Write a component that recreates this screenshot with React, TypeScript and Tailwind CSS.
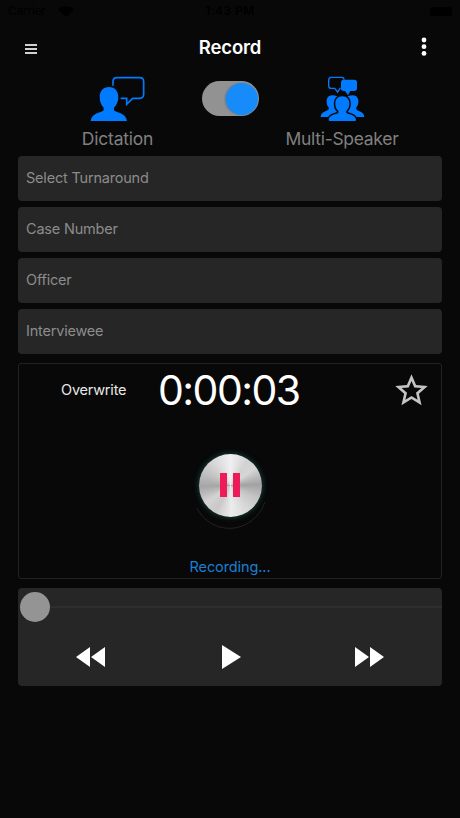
import { MdStarBorder } from 'react-icons/md';

const fields = ['Select Turnaround', 'Case Number', 'Officer', 'Interviewee'];

function StatusBar() {
    return (
        <div className="grid h-[22px] shrink-0 grid-cols-3 items-center px-2 text-[12px] text-black">
            <div className="flex items-center gap-3">
                <span className="tracking-[-0.2px]">Carrier</span>
                <svg width="16" height="11" viewBox="0 0 16 11" fill="currentColor">
                    <path d="M8 11 0 3.5C4.5 -.8 11.5 -.8 16 3.5Z" />
                </svg>
            </div>
            <span className="text-center font-semibold tracking-[0.4px]">1:43 PM</span>
            <div className="flex justify-end">
                <div className="h-[9px] w-[22px] rounded-[2px] bg-black" />
            </div>
        </div>
    );
}

function Header() {
    return (
        <header className="grid h-[50px] shrink-0 grid-cols-[1fr_auto_1fr] items-center pl-[25px] pr-[33px]">
            <div className="flex w-[12px] flex-col gap-[2px] pt-1">
                <div className="h-[2px] bg-[#d0d0d0]" />
                <div className="h-[2px] bg-[#d0d0d0]" />
                <div className="h-[2px] bg-[#d0d0d0]" />
            </div>
            <h1 className="ml-[8px] pt-[1px] text-[18.5px] font-semibold tracking-[-0.15px] text-white">Record</h1>
            <svg className="justify-self-end" width="6" height="20" viewBox="0 0 6 20" fill="#fff">
                <circle cx="3" cy="3" r="2.4" />
                <circle cx="3" cy="9.7" r="2.4" />
                <circle cx="3" cy="16.4" r="2.4" />
            </svg>
        </header>
    );
}

function DictationIcon() {
    return (
        <svg className="-ml-[1px]" width="55" height="46" viewBox="60 18 165 138" fill="#007aff">
            <path d="M117 51c17 0 28 12 28 30 0 13-5 25-13 32v8c5 7 36 7 39 32H62c3-25 34-25 39-32v-8c-8-7-12-19-12-32 0-18 11-30 28-30Z" />
            <path
                d="M129 47V35q0-12 12-12h68q12 0 12 12v38q0 12-12 12h-21l-18 18V85h-18"
                fill="none"
                stroke="#007aff"
                strokeWidth="5"
            />
        </svg>
    );
}

function SpeakersIcon() {
    return (
        <svg width="45" height="46" viewBox="135 18 135 138" fill="#007aff">
            <path
                d="M197 55h-2l-7 11-9-11h-10q-8 0-8-8V30q0-8 8-8h31q7 0 7 7"
                fill="none"
                stroke="#007aff"
                strokeWidth="4"
            />
            <path d="M206 29h32q8 0 8 8v18q0 8-8 8h-12l-7 13-9-13h-4q-8 0-8-8V37q0-8 8-8Z" />
            {/* people at the back */}
            <path d="M172 76c-13 0-18 10-17 21 0 8 3 13 7 17 0 12-24 7-25 27h62V90c-8-10-16-14-27-14Z" />
            <path d="M233 76c13 0 18 10 17 21 0 8-3 13-7 17 0 12 24 7 25 27h-62V90c8-10 16-14 27-14Z" />
            {/* front person, cut out from the others */}
            <path
                d="M202 79c14 0 22 10 21 24 0 9-4 15-9 20v5c5 6 29 4 29 22 0 2-1 3-3 3h-76c-2 0-3-1-3-3 0-18 24-16 29-22v-5c-6-5-9-11-9-20-1-14 7-24 21-24Z"
                stroke="#080808"
                strokeWidth="9"
                paintOrder="stroke"
            />
        </svg>
    );
}

function ModeSwitch() {
    return (
        <div className="flex h-[84px] shrink-0 justify-center pt-1">
            <div className="flex w-[117px] flex-col items-center pr-[1px]">
                <DictationIcon />
                <span className="mt-[4px] text-[17.5px] leading-[26px] tracking-[-0.2px] text-[#808080]">Dictation</span>
            </div>
            <div className="mx-[25px] mt-[5px] flex h-[35px] w-[57px] items-center justify-end rounded-full bg-[#929292] pr-[1px]">
                <div className="size-[32px] rounded-full bg-[#188bfb] shadow-[-1px_0_2px_#55779a]" />
            </div>
            <div className="flex w-[117px] flex-col items-center">
                <SpeakersIcon />
                <span className="mt-[4px] whitespace-nowrap text-[17.5px] leading-[26px] tracking-[-0.3px] text-[#808080]">
                    Multi-Speaker
                </span>
            </div>
        </div>
    );
}

function RecordButton() {
    return (
        <button className="relative mt-[38px] size-[63px] rounded-full bg-[conic-gradient(#f0f0f0_0deg,#d2d2d2_35deg,#d6d6d6_55deg,#a2a2a2_88deg,#c4c4c4_115deg,#d8d8d8_145deg,#ececec_178deg,#c8c8c8_210deg,#d4d4d4_235deg,#a6a6a6_268deg,#c0c0c0_295deg,#d8d8d8_325deg,#f0f0f0_360deg)] shadow-[0_0_5px_1px_#143b36]">
            <svg className="absolute -left-[6px] top-0" width="76" height="76" viewBox="0 0 76 76" fill="none">
                <path d="M4 54C18 82 59 82 72 48" stroke="#232323" />
            </svg>
            <div className="relative flex justify-center gap-[6px]">
                <div className="h-6 w-[7px] bg-[#ed1b58]" />
                <div className="h-6 w-[7px] bg-[#ed1b58]" />
            </div>
        </button>
    );
}

function Recorder() {
    return (
        <section className="mt-[9px] flex h-[216px] shrink-0 flex-col items-center rounded-[3px] border border-[#222]">
            <div className="grid h-[52px] w-full grid-cols-[139px_1fr_49px] items-center">
                <span className="pl-[42px] pt-[1px] text-[14.5px] tracking-[-0.2px] text-[#e8e8e8]">Overwrite</span>
                <span className="text-[41px] leading-[52px] tracking-[-1.55px] text-white">0:00:03</span>
                <MdStarBorder className="mt-[2px]" size={39} color="#c4c4c4" />
            </div>
            <RecordButton />
            <p className="mt-auto pb-[1px] text-[14.5px] leading-[20px] tracking-[-0.1px] text-[#1b7fd4]">Recording...</p>
        </section>
    );
}

function Player() {
    return (
        <section className="mt-[9px] h-[98px] shrink-0 rounded-[4px] bg-[#262626]">
            <div className="flex h-[38px] items-center pl-[2px]">
                <div className="size-[30px] rounded-full bg-[#949494]" />
                <div className="h-[2px] flex-1 bg-[#2e2e2e]" />
            </div>
            <div className="flex h-[62px] items-center justify-between px-[58px]">
                <svg width="29" height="20" viewBox="0 0 29 20" fill="#fff">
                    <path d="M14 0v20L0 10ZM29 0v20L15 10Z" />
                </svg>
                <svg className="ml-[3px]" width="19" height="24" viewBox="0 0 19 24" fill="#fff">
                    <path d="M0 0v24l19-12Z" />
                </svg>
                <svg width="29" height="20" viewBox="0 0 29 20" fill="#fff">
                    <path d="M0 0v20l14-10ZM15 0v20l14-10Z" />
                </svg>
            </div>
        </section>
    );
}

export default function App() {
    return (
        <div className="flex h-screen flex-col overflow-hidden bg-[#080808] font-['Inter',sans-serif]">
            <StatusBar />
            <Header />
            <ModeSwitch />
            <main className="flex flex-col px-[18px]">
                <div className="flex flex-col gap-[6.5px]">
                    {fields.map((label) => (
                        <div
                            key={label}
                            className="flex h-[44.5px] items-center rounded-[4px] bg-[#262626] px-2 text-[14.5px] tracking-[-0.2px] text-[#8c8c8c]"
                        >
                            {label}
                        </div>
                    ))}
                </div>
                <Recorder />
                <Player />
            </main>
        </div>
    );
}
